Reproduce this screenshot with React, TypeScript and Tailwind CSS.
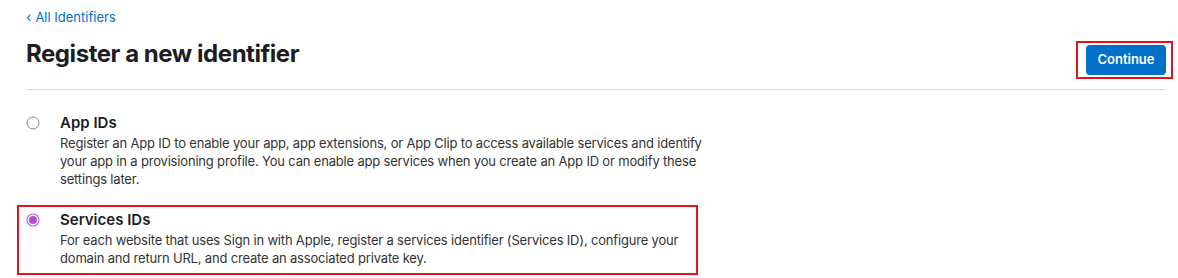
import React, { useState } from 'react';

type Option = {
  id: string;
  title: string;
  desc: string;
};

const options: Option[] = [
  {
    id: 'app',
    title: 'App IDs',
    desc: 'Register an App ID to enable your app, app extensions, or App Clip to access available services and identify your app in a provisioning profile. You can enable app services when you create an App ID or modify these settings later.',
  },
  {
    id: 'services',
    title: 'Services IDs',
    desc: 'For each website that uses Sign in with Apple, register a services identifier (Services ID), configure your domain and return URL, and create an associated private key.',
  },
];

// radio đã vẽ bằng svg
const Radio: React.FC<{ checked: boolean }> = ({ checked }) => (
  <svg width="14" height="14" viewBox="0 0 14 14" className="block">
    {checked ? (
      <>
        <circle cx="7" cy="7" r="6" fill="#fff" stroke="#b86ad4" strokeWidth="1.2" />
        <circle cx="7" cy="7" r="4" fill="#b14fcd" />
      </>
    ) : (
      <circle cx="7" cy="7" r="6" fill="#fff" stroke="#8a8a8a" strokeWidth="1" />
    )}
  </svg>
);

const App: React.FC = () => {
  const [selected, setSelected] = useState<string>('services');

  return (
    <div className="w-[1178px] h-[278px] bg-white font-['Inter','Liberation_Sans',sans-serif] text-[#1d1d1f] pl-[26px] pr-[12px] pt-[8px] overflow-hidden">
      <a href="#" className="flex items-center gap-[4px] text-[13px] leading-[18px] text-[#0070c9]">
        <span className="text-[14px] leading-[18px] -mt-[1px]">‹</span>
        <span>All Identifiers</span>
      </a>

      {/* tiêu đề + nút */}
      <div className="flex justify-between items-start mt-[12px]">
        <h1 className="text-[24px] leading-[32px] font-bold tracking-[-0.45px]">Register a new identifier</h1>
        <div className="border-2 border-[#e3121d] pl-[8px] pr-[5px] py-[2px] -mr-[7px] mt-[3px]">
          <button className="w-[80px] h-[30px] rounded-[4px] bg-[#0070c9] text-white text-[13px] font-semibold">
            Continue
          </button>
        </div>
      </div>

      <div className="h-px bg-[#d6d6d6] mt-[10px]" />

      <div className="mt-[23px] flex flex-col gap-[15px]">
        {options.map((o) => {
          const checked = selected === o.id;
          return (
            <label
              key={o.id}
              onClick={() => setSelected(o.id)}
              className={
                checked
                  ? 'flex w-[681px] -ml-[9px] border-2 border-[#e3121d] pl-[7px] pt-[3px] pb-[6px] cursor-pointer'
                  : 'flex w-[681px] border-2 border-transparent -ml-[9px] pl-[7px] pb-[0px] -mt-[2px] cursor-pointer'
              }
            >
              <div className="w-[34px] shrink-0 pt-[3px]">
                <Radio checked={checked} />
              </div>
              <div className="flex-1 min-w-0">
                <div className="text-[15px] leading-[20px] font-semibold">{o.title}</div>
                <p className="text-[13px] leading-[18px] tracking-[-0.18px] text-[#333] mt-[1px] w-[660px]">
                  {o.desc}
                </p>
              </div>
            </label>
          );
        })}
      </div>
    </div>
  );
};

export default App;
